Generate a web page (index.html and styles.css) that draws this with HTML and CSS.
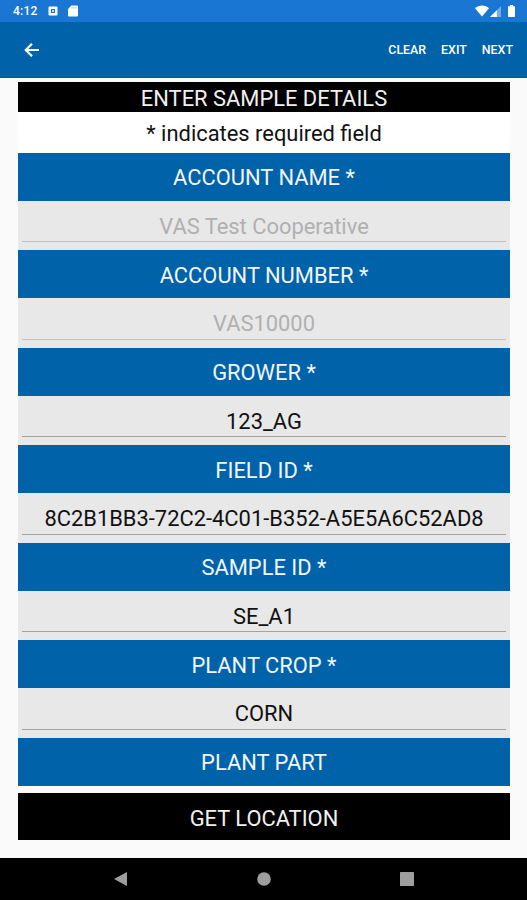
FILE: index.html
```html
<!DOCTYPE html>
<html lang="en">
<head>
    <meta charset="UTF-8">
    <meta name="viewport" content="width=device-width, initial-scale=1.0">
    <title>Enter Sample Details</title>
    <link rel="stylesheet" href="styles.css">
</head>
<body>
    <div class="screen">
        <!-- status bar -->
        <div class="status-bar">
            <span class="clock">4:12</span>
            <svg class="status-app" width="10" height="10" viewBox="0 0 10 10">
                <path fill="#fff" fill-rule="evenodd" d="M1.5 0.5h7a1 1 0 0 1 1 1v7a1 1 0 0 1-1 1h-7a1 1 0 0 1-1-1v-7a1 1 0 0 1 1-1zM3 3v4h4V3z"/>
                <circle cx="5" cy="5" r="1" fill="#fff"/>
            </svg>
            <svg class="status-card" width="10" height="12" viewBox="0 0 10 12">
                <path fill="#fff" d="M3.4 0.5H9a1 1 0 0 1 1 1V10.5a1 1 0 0 1-1 1H1a1 1 0 0 1-1-1V4z"/>
                <path stroke="#1976d2" stroke-width=".7" opacity=".6" d="M4 1.8v1.8M6 1.8v1.8M8 1.8v1.8"/>
            </svg>
            <svg class="status-wifi" width="14" height="12" viewBox="0 0 14 12">
                <path fill="#fff" d="M0 3.2C4 -.4 10 -.4 14 3.2L7 11.5z"/>
            </svg>
            <svg class="status-signal" width="11" height="11" viewBox="0 0 11 11">
                <path fill="#fff" opacity=".4" d="M11 0v11H0z"/>
                <path fill="#fff" d="M6.8 4.2V11H0z"/>
            </svg>
            <svg class="status-battery" width="7" height="12" viewBox="0 0 7 12">
                <path fill="#fff" d="M2 0h3v1.2h1.2a.8.8 0 0 1 .8.8v9.2a.8.8 0 0 1-.8.8H.8a.8.8 0 0 1-.8-.8V2a.8.8 0 0 1 .8-.8H2z"/>
            </svg>
        </div>

        <!-- toolbar -->
        <div class="toolbar">
            <svg class="back" width="16" height="14" viewBox="0 0 16 14">
                <path fill="none" stroke="#fff" stroke-width="2.2" d="M15 7H2M8 .8L1.8 7L8 13.2"/>
            </svg>
            <span class="action clear">CLEAR</span>
            <span class="action">EXIT</span>
            <span class="action">NEXT</span>
        </div>

        <div class="form">
            <div class="title">ENTER SAMPLE DETAILS</div>
            <div class="note">* indicates required field</div>

            <div class="label">ACCOUNT NAME *</div>
            <div class="field disabled"><span>VAS Test Cooperative</span></div>
            <div class="label">ACCOUNT NUMBER *</div>
            <div class="field disabled"><span>VAS10000</span></div>
            <div class="label">GROWER *</div>
            <div class="field"><span>123_AG</span></div>
            <div class="label">FIELD ID *</div>
            <div class="field"><span>8C2B1BB3-72C2-4C01-B352-A5E5A6C52AD8</span></div>
            <div class="label">SAMPLE ID *</div>
            <div class="field"><span>SE_A1</span></div>
            <div class="label">PLANT CROP *</div>
            <div class="field"><span>CORN</span></div>
            <div class="label">PLANT PART</div>

            <div class="location">GET LOCATION</div>
        </div>

        <!-- system navigation -->
        <div class="nav-bar">
            <svg width="13" height="14" viewBox="0 0 13 14"><path fill="#9e9e9e" d="M13 0v14L0 7z"/></svg>
            <svg width="14" height="14" viewBox="0 0 14 14"><circle cx="7" cy="7" r="6.8" fill="#9e9e9e"/></svg>
            <svg width="14" height="14" viewBox="0 0 14 14"><rect width="14" height="14" rx=".6" fill="#9e9e9e"/></svg>
        </div>
    </div>
</body>
</html>
```
FILE: styles.css
```css
* {
    box-sizing: border-box;
}
body {
    margin: 0;
    font-family: Roboto, "Liberation Sans", sans-serif;
    background-color: #fafafa;
}
svg {
    display: block;
    flex: none;
}
.screen {
    display: flex;
    flex-direction: column;
    width: 527px;
    height: 900px;
    overflow: hidden;
}
.status-bar {
    display: flex;
    align-items: center;
    flex: none;
    height: 22px;
    padding: 0 12px 0 13px;
    background-color: #1976d2;
    color: #fff;
}
.clock {
    width: 35px;
    font-size: 12px;
    font-weight: 500;
    letter-spacing: 0.2px;
}
.status-card {
    margin-left: 10px;
}
.status-wifi {
    margin-left: auto;
}
.status-signal {
    margin-left: 1px;
}
.status-battery {
    margin-left: 7px;
}
.toolbar {
    display: flex;
    align-items: center;
    flex: none;
    height: 56px;
    padding: 0 14px 0 24px;
    background-color: #0062a9;
    border-bottom: 1px solid #00549b;
}
.action {
    color: #fff;
    font-size: 12.4px;
    font-weight: 500;
    margin-left: 15px;
}
.clear {
    margin-left: auto;
}
.form {
    flex: 1;
    padding: 4px 17px 0 18px;
    font-size: 21.9px;
    line-height: 28px;
    text-align: center;
}
.title {
    height: 30px;
    padding-top: 3px;
    background-color: #000;
    color: #f0f0f0;
}
.note {
    height: 40.8px;
    padding-top: 8px;
    background-color: #fff;
    color: #111;
}
.label {
    height: 48px;
    padding-top: 11.4px;
    background-color: #0062a9;
    color: #f2f6fc;
}
.field {
    height: 49.5px;
    padding: 0 4px 7.8px;
    background-color: #e8e8e8;
    color: #111;
}
.field span {
    display: block;
    height: 41.7px;
    padding-top: 11.9px;
    border-bottom: 1px solid #a3a3a3;
}
.disabled {
    color: #b0b0b0;
}
.disabled span {
    border-bottom-color: #c2c2c2;
}
.location {
    height: 47px;
    margin-top: 7.2px;
    padding-top: 12px;
    background-color: #000;
    color: #f0f0f0;
}
.nav-bar {
    display: flex;
    align-items: center;
    justify-content: space-between;
    flex: none;
    height: 42px;
    padding: 0 113px 0 114px;
    background-color: #000;
}
```
